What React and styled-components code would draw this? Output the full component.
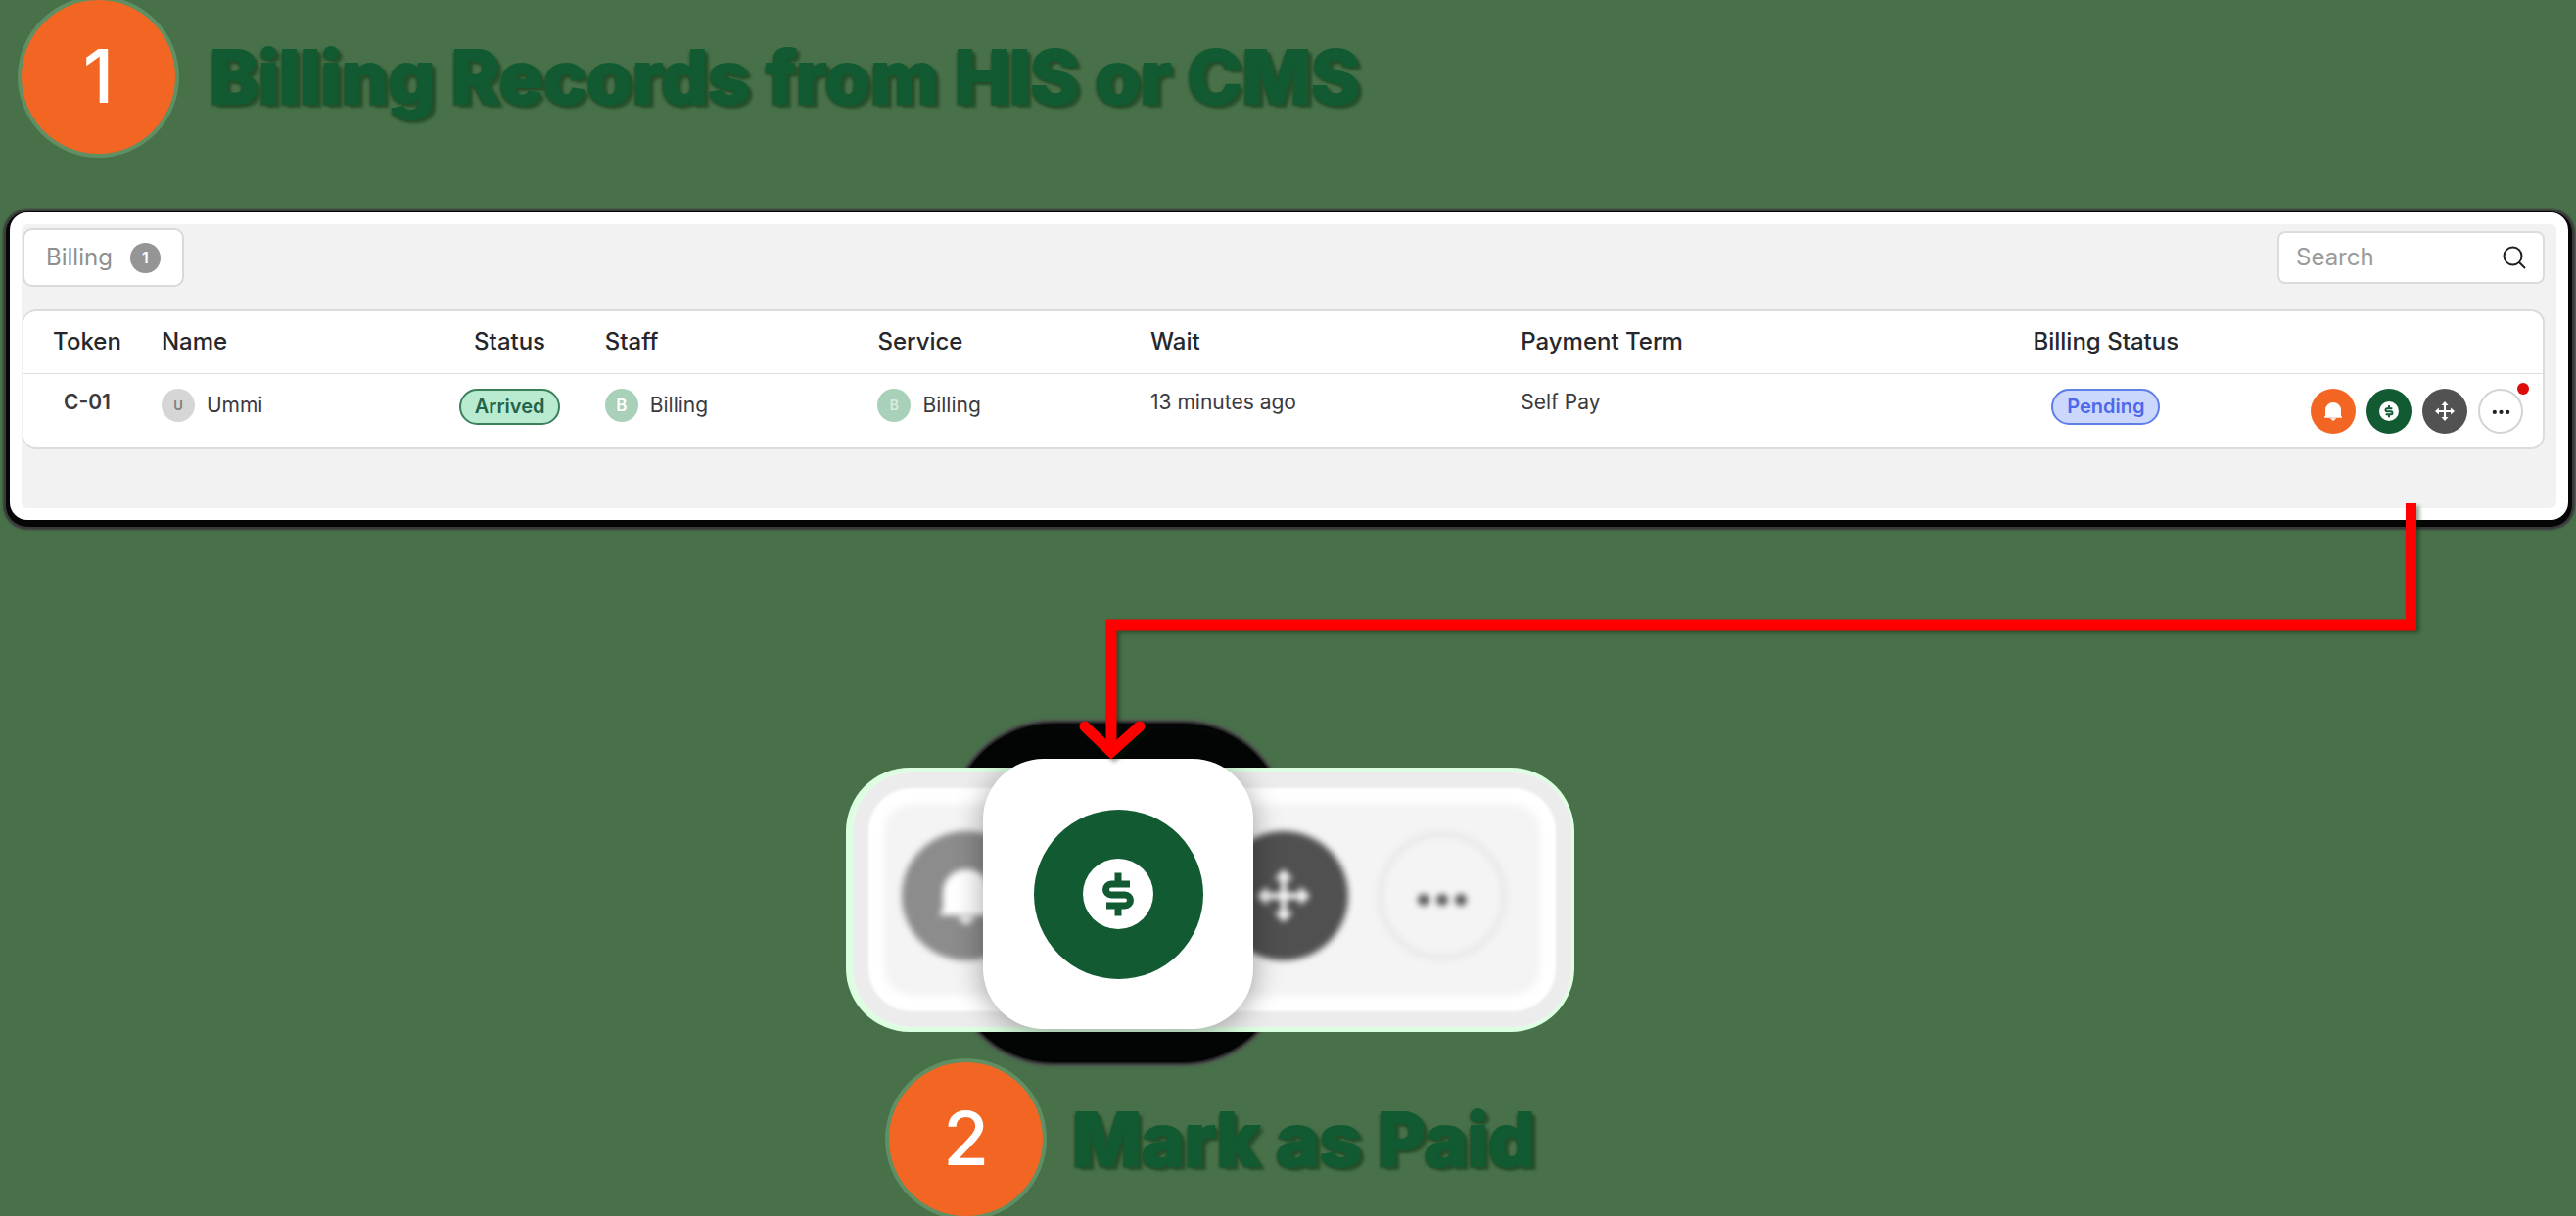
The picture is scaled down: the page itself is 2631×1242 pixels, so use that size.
import React from "react";
import styled, { createGlobalStyle } from "styled-components";

const GlobalStyle = createGlobalStyle`
  *, *::before, *::after { box-sizing: border-box; }
  body {
    margin: 0;
    background: #48714a;
    color: #26272c;
    font-family: Inter, "Noto Sans", sans-serif;
    font-size: 21px;
  }
`;

const Page = styled.main`
  min-width: 1900px;
  overflow: hidden;
`;

/* ---------- step headings ---------- */

const StepHeading = styled.header`
  display: flex;
  align-items: center;
  gap: ${(p) => p.$gap};
  padding-left: ${(p) => p.$indent || "0"};
`;

const StepNumber = styled.span`
  display: grid;
  place-items: center;
  flex: none;
  width: 157px;
  height: 157px;
  padding-bottom: 4px;
  border-radius: 50%;
  background: #f36523;
  box-shadow: 0 0 0 4px #5f8f62;
  color: #fff;
  font: 500 76px/1 Inter, sans-serif;
`;

const StepTitle = styled.h2`
  margin: 0;
  color: #115a32;
  font: 800 75px/96px Inter, sans-serif;
  white-space: nowrap;
  -webkit-text-stroke: 2px #115a32;
  text-shadow: 3px 2px 3px #244d28, -2px 2px 3px #244d28, 5px 4px 3px #2b5630;
`;

/* ---------- billing card ---------- */

const Card = styled.section`
  margin: 60px 8px 0 10px;
  padding: 12px;
  border-radius: 18px;
  background: #fff;
  box-shadow: 0 3px 0 4px #060606, 0 3px 2px 7px #3a383b;
`;

const CardBody = styled.div`
  padding: 4px 12px 60px 1px;
  border-radius: 6px;
  background: #f2f2f2;
`;

const Toolbar = styled.div`
  display: flex;
  align-items: center;
  justify-content: space-between;
  margin-bottom: 23px;
`;

const Tab = styled.button`
  display: flex;
  align-items: center;
  justify-content: space-between;
  width: 165px;
  height: 60px;
  padding: 0 22px;
  border: 2px solid #d9d9d9;
  border-radius: 10px;
  background: #fff;
  color: #8f8f8f;
  font: 400 24px/30px Inter, sans-serif;
`;

const Count = styled.span`
  display: grid;
  place-items: center;
  width: 31px;
  height: 31px;
  border-radius: 50%;
  background: #959595;
  color: #fff;
  font-size: 16px;
  font-weight: 600;
`;

const SearchBox = styled.label`
  display: flex;
  align-items: center;
  width: 273px;
  height: 54px;
  padding: 0 17px 0 17px;
  border: 2px solid #dcdcdc;
  border-radius: 8px;
  background: #fff;
`;

const SearchInput = styled.input`
  flex: 1;
  min-width: 0;
  padding: 0;
  border: 0;
  outline: 0;
  background: none;
  color: #26272c;
  font: 400 24px/30px Inter, sans-serif;
  &::placeholder { color: #9b9b9b; opacity: 1; }
`;

const TableFrame = styled.div`
  border: 2px solid #dcdcdc;
  border-left-width: 1px;
  border-radius: 14px;
  background: #fff;
`;

const Table = styled.table`
  width: 100%;
  table-layout: fixed;
  border-collapse: collapse;
`;

const HeadCell = styled.th`
  height: 63px;
  padding: 0 11px;
  border-bottom: 1px solid #dedede;
  font-size: 24px;
  font-weight: 500;
  line-height: 30px;
  text-align: ${(p) => (p.$center ? "center" : "left")};
  white-space: nowrap;
`;

const Cell = styled.td`
  height: 76px;
  padding: 15px 11px 0;
  color: #3a3a3f;
  font-weight: ${(p) => (p.$strong ? 600 : 400)};
  line-height: 28px;
  text-align: ${(p) => (p.$center ? "center" : "left")};
  vertical-align: top;
`;

const Person = styled.span`
  display: flex;
  align-items: center;
  gap: 12px;
`;

const Avatar = styled.span`
  display: grid;
  place-items: center;
  width: 34px;
  height: 34px;
  border-radius: 50%;
  background: ${(p) => p.$bg};
  color: ${(p) => p.$fg};
  font-size: ${(p) => p.$size};
  font-weight: 600;
`;

const Pill = styled.span`
  display: inline-block;
  height: 37px;
  padding: 0 14px;
  border: 2px solid ${(p) => p.$line};
  border-radius: 19px;
  background: ${(p) => p.$bg};
  color: ${(p) => p.$fg};
  font-size: 20px;
  font-weight: 600;
  line-height: 33px;
`;

const Actions = styled.div`
  display: flex;
  justify-content: flex-end;
  gap: 11px;
  padding-right: 9px;
`;

const RoundButton = styled.button`
  position: relative;
  display: grid;
  place-items: center;
  width: 46px;
  height: 46px;
  padding: 0;
  border: ${(p) => (p.$outlined ? "2px solid #d4d4d4" : "0")};
  border-radius: 50%;
  background: ${(p) => p.$bg};
`;

const AlertDot = styled.span`
  position: absolute;
  top: -8px;
  right: -8px;
  width: 12px;
  height: 12px;
  border-radius: 50%;
  background: #de0b0b;
`;

/* ---------- enlarged toolbar ---------- */

const Detail = styled.section`
  position: relative;
  display: flex;
  flex-direction: column;
  align-items: center;
  gap: 36px;
  padding: 258px 155px 0 0;
`;

const Connector = styled.svg`
  position: absolute;
  z-index: 3;
  top: -17px;
  left: calc(50% - 216px);
  width: calc(50% + 60px);
  height: 270px;
  filter: drop-shadow(3px 3px 2px rgba(0, 30, 0, 0.45));
`;

const Stage = styled.div`
  position: relative;
  isolation: isolate;
  &::before {
    content: "";
    position: absolute;
    z-index: -1;
    top: -50px;
    left: 101px;
    width: 340px;
    height: 346px;
    border-radius: 104px;
    background: #040605;
    box-shadow: 0 0 3px 2px #1a1a1a, 0 0 4px 4px #555356;
  }
`;

const Panel = styled.div`
  display: flex;
  align-items: center;
  gap: 30px;
  width: 734px;
  height: 260px;
  padding: 0 50px 8px;
  border-radius: 60px;
  background: #f4f4f4;
  box-shadow: -2px 0 0 5px #dcffe1, inset 0 0 3px 16px #ececec, inset 0 0 8px 32px #fff;
`;

const BlurredDisc = styled.span`
  display: grid;
  place-items: center;
  flex: none;
  width: 132px;
  height: 132px;
  border: ${(p) => (p.$outlined ? "6px solid #e8e8e8" : "0")};
  border-radius: 50%;
  background: ${(p) => p.$bg};
  filter: blur(3px);
`;

const Focus = styled.div`
  position: absolute;
  z-index: 2;
  top: -14px;
  left: 133px;
  display: grid;
  place-items: center;
  width: 276px;
  height: 276px;
  border-radius: 62px;
  background: #fff;
  box-shadow: 0 4px 30px rgba(0, 0, 0, 0.35);
`;

const PaidButton = styled.button`
  display: grid;
  place-items: center;
  width: 173px;
  height: 173px;
  padding: 0;
  border: 0;
  border-radius: 50%;
  background: #115a32;
`;

/* ---------- icons ---------- */

const SearchIcon = () => (
  <svg width="24" height="24" viewBox="0 0 24 24" fill="none" stroke="#1f1f1f" strokeWidth="2" aria-hidden="true">
    <circle cx="10.5" cy="10.5" r="9" />
    <path d="M17 17l6 6" />
  </svg>
);

const BellIcon = ({ size }) => (
  <svg width={size} height={size} viewBox="0 0 60 60" fill="#fff" aria-hidden="true">
    <path d="M3 50v-3l3-3V26a24 23 0 0 1 48 0v18l3 3v3z" />
    <path d="M20 52h20l-10 8z" />
  </svg>
);

const CoinIcon = ({ size }) => (
  <svg width={size} height={size} viewBox="-36 -36 72 72" aria-hidden="true">
    <circle r="36" fill="#fff" />
    <path
      d="M12-10H-7a5.500 5.500 0 0 0 0 11H7a5.500 5.500 0 0 1 0 11H-12M0-21.500v9M0 13v9.500"
      fill="none"
      stroke="#115a32"
      strokeWidth="7"
    />
  </svg>
);

const MoveIcon = ({ size }) => (
  <svg width={size} height={size} viewBox="-28 -28 56 56" aria-hidden="true">
    <path d="M0-20V20M-20 0H20" stroke="#fff" strokeWidth="6" />
    <path d="M0-28l10 11h-20zM0 28l10-11h-20zM-28 0l11-10v20zM28 0l-11-10v20z" fill="#fff" />
  </svg>
);

const DotsIcon = ({ size, color }) => (
  <svg width={size} height={size} viewBox="0 0 54 54" fill={color} aria-hidden="true">
    <circle cx="8" cy="31" r="6" />
    <circle cx="27" cy="31" r="6" />
    <circle cx="46" cy="31" r="6" />
  </svg>
);

/* ---------- data ---------- */

const columns = [
  { label: "Token", width: "5.05%", center: true },
  { label: "Name", width: "10.9%" },
  { label: "Status", width: "6.7%", center: true },
  { label: "Staff", width: "10.83%" },
  { label: "Service", width: "10.83%" },
  { label: "Wait", width: "14.7%" },
  { label: "Payment Term", width: "17.55%" },
  { label: "Billing Status", width: "12.2%", center: true },
  { label: "", width: "11.24%" },
];

export default function App() {
  return (
    <Page>
      <GlobalStyle />
      <StepHeading $gap="35px" $indent="22px">
        <StepNumber>1</StepNumber>
        <StepTitle>Billing Records from HIS or CMS</StepTitle>
      </StepHeading>

      <Card>
        <CardBody>
          <Toolbar>
            <Tab type="button">
              Billing <Count>1</Count>
            </Tab>
            <SearchBox>
              <SearchInput type="text" placeholder="Search" aria-label="Search" />
              <SearchIcon />
            </SearchBox>
          </Toolbar>
          <TableFrame>
            <Table>
              <colgroup>
                {columns.map((c) => (
                  <col key={c.label} style={{ width: c.width }} />
                ))}
              </colgroup>
              <thead>
                <tr>
                  {columns.map((c) => (
                    <HeadCell key={c.label} $center={c.center}>
                      {c.label}
                    </HeadCell>
                  ))}
                </tr>
              </thead>
              <tbody>
                <tr>
                  <Cell $center $strong>C-01</Cell>
                  <Cell>
                    <Person>
                      <Avatar $bg="#d6d6d6" $fg="#7d7d7d" $size="13px">U</Avatar>
                      Ummi
                    </Person>
                  </Cell>
                  <Cell $center>
                    <Pill $bg="#b9ebd0" $line="#3b7f5c" $fg="#24634a">Arrived</Pill>
                  </Cell>
                  <Cell>
                    <Person>
                      <Avatar $bg="#a9d0b8" $fg="#fff" $size="17px">B</Avatar>
                      Billing
                    </Person>
                  </Cell>
                  <Cell>
                    <Person>
                      <Avatar $bg="#a9d0b8" $fg="#d9ecdf" $size="14px">B</Avatar>
                      Billing
                    </Person>
                  </Cell>
                  <Cell>13 minutes ago</Cell>
                  <Cell>Self Pay</Cell>
                  <Cell $center>
                    <Pill $bg="#ccd7fe" $line="#5f7fe8" $fg="#4d69ea">Pending</Pill>
                  </Cell>
                  <Cell>
                    <Actions>
                      <RoundButton type="button" $bg="#f36523" aria-label="Call">
                        <BellIcon size={20} />
                      </RoundButton>
                      <RoundButton type="button" $bg="#115a32" aria-label="Mark as paid">
                        <CoinIcon size={20} />
                      </RoundButton>
                      <RoundButton type="button" $bg="#525252" aria-label="Move">
                        <MoveIcon size={20} />
                      </RoundButton>
                      <RoundButton type="button" $bg="#fff" $outlined aria-label="More">
                        <DotsIcon size={19} color="#222" />
                        <AlertDot />
                      </RoundButton>
                    </Actions>
                  </Cell>
                </tr>
              </tbody>
            </Table>
          </TableFrame>
        </CardBody>
      </Card>

      <Detail>
        <Connector viewBox="0 0 1376 270" preserveAspectRatio="xMaxYMin meet" fill="none" stroke="#f00" aria-hidden="true">
          <path d="M1363 0V124H35V250" strokeWidth="11" />
          <path d="M8 228L35 254L64 228" strokeWidth="11" strokeLinecap="round" />
        </Connector>
        <Stage>
          <Panel>
            <BlurredDisc $bg="#8c8c8c">
              <BellIcon size={60} />
            </BlurredDisc>
            <BlurredDisc $bg="#8c8c8c" />
            <BlurredDisc $bg="#505050">
              <MoveIcon size={54} />
            </BlurredDisc>
            <BlurredDisc $bg="#f4f4f4" $outlined>
              <DotsIcon size={54} color="#555" />
            </BlurredDisc>
          </Panel>
          <Focus>
            <PaidButton type="button" aria-label="Mark as paid">
              <CoinIcon size={72} />
            </PaidButton>
          </Focus>
        </Stage>
        <StepHeading $gap="30px">
          <StepNumber>2</StepNumber>
          <StepTitle>Mark as Paid</StepTitle>
        </StepHeading>
      </Detail>
    </Page>
  );
}
